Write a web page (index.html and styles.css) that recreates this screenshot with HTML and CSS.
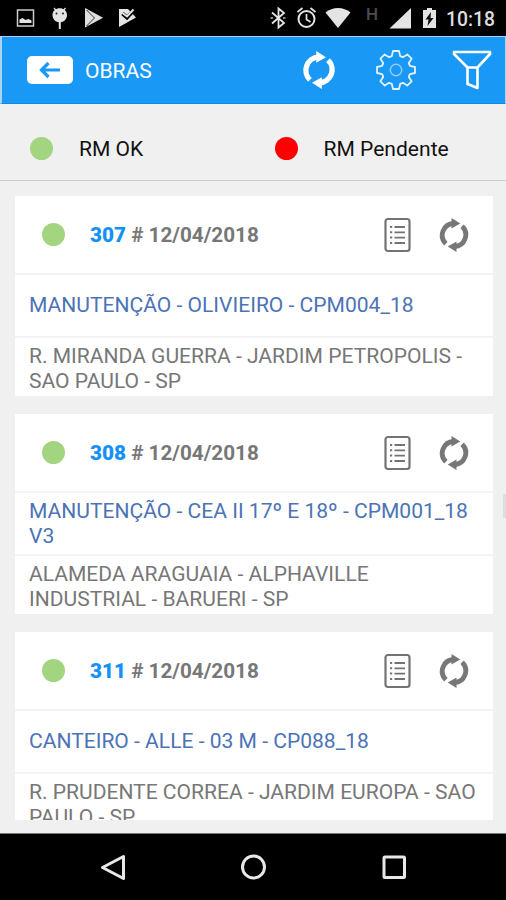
FILE: index.html
```html
<!DOCTYPE html>
<html lang="pt-BR">
<head>
<meta charset="utf-8">
<title>Obras</title>
<link rel="stylesheet" href="styles.css">
</head>
<body>
<svg class="defs" aria-hidden="true">
  <symbol id="sync" viewBox="0 0 30 34">
    <g id="half"><path d="M6.900 25.800A11.800 11.800 0 0 1 14.500 5.500" fill="none" stroke="currentColor" stroke-width="4.800"/><path d="M12.500 0 21.300 5.600 12.500 10.500z" fill="currentColor"/></g>
    <use href="#half" transform="rotate(180 15 17)"/>
  </symbol>
  <symbol id="list" viewBox="0 0 28 36">
    <rect x="2.500" y="2" width="24" height="32" rx="2.500" fill="none" stroke="currentColor" stroke-width="2.200"/>
    <path d="M11.500 10h10.500M11.500 15.300h10.500M11.500 20.600h10.500M11.500 26h10.500" stroke="currentColor" stroke-width="1.800"/>
    <path d="M7 10h2.200M7 15.300h2.200M7 20.600h2.200M7 26h2.200" stroke="currentColor" stroke-width="2"/>
  </symbol>
</svg>
<div class="screen">
  <div class="status">
    <svg width="150" height="36" viewBox="0 0 150 36">
      <rect x="17.500" y="10" width="16" height="16" fill="none" stroke="#ccc" stroke-width="1.500"/>
      <path d="M19.500 23v-3.500l3-1.500 3 2 3-1 3 1.500v2.500z" fill="#e4e4e4"/>
      <path d="M52.500 15c0-9 14.500-9 14.500 0 0 4-3 7-6.200 7.300V29h-2v-6.700c-3.300-.3-6.300-3.300-6.300-7.300z" fill="#e4e4e4"/>
      <path d="m54 8 2.500 3m9-3L63 11" stroke="#e4e4e4" stroke-width="1.200"/>
      <circle cx="56.500" cy="13.500" r="1" fill="#222"/><circle cx="63" cy="13.500" r="1" fill="#222"/>
      <path d="m85 8 18 9.800L85 27.500z" fill="#e0e0e0"/>
      <path d="m86.500 10 8 8-8 8" fill="none" stroke="#333" stroke-width="1"/>
      <path d="M119 9h9l8 8.500-17 9.500z" fill="#e4e4e4"/>
      <path d="m122.500 13.500 4.500 4 7.500-8" fill="none" stroke="#000" stroke-width="3.800"/>
      <path d="m122.500 13 4.500 3.500 6.500-7" fill="none" stroke="#e4e4e4" stroke-width="2"/>
    </svg>
    <div class="status-right">
      <svg width="178" height="36" viewBox="266 0 178 36">
        <path d="m272 12.500 12 10.500-5.500 4.500V8.500L284 13l-12 10.500" fill="none" stroke="#e4e4e4" stroke-width="1.800"/>
        <path d="M270.500 18h2.500m10 0h2.500" stroke="#bbb" stroke-width="1.500"/>
        <circle cx="306.500" cy="19" r="8" fill="none" stroke="#e4e4e4" stroke-width="2"/>
        <path d="M306.500 14v5.500l4 2.500m-13-10 5-4m13 4-5-4" fill="none" stroke="#e4e4e4" stroke-width="1.700"/>
        <path d="M325.500 12.500c7-6 18-6 25 0L338 28z" fill="#e4e4e4"/>
        <text x="366" y="19.500" class="network">H</text>
        <path d="M389.500 28.500 411 8v20.500z" fill="#e4e4e4"/>
        <path d="M423 10h4V8h5v2h4v18h-13z" fill="#e4e4e4"/>
        <path d="m431 12-5.500 7.500h3L427.500 26l6-8h-3z" fill="#111"/>
      </svg>
      <span class="clock">10:18</span>
    </div>
  </div>
  <header class="bar">
    <div class="back"><svg width="22" height="18" viewBox="0 0 22 18"><path d="M21 9H3M9.500 2 2.500 9l7 7" fill="none" stroke="#1998f6" stroke-width="3.200"/></svg></div>
    <h1 class="title">OBRAS</h1>
    <div class="tools">
      <svg class="bar-sync"><use href="#sync"/></svg>
      <svg class="gear" viewBox="-20 -20 40 40"><path d="M-4.200-13.900-3-19H3l1.200 5.100 2.700 1.100 4.400-2.800 4.300 4.300-2.800 4.400 1.100 2.700L19-3V3l-5.100 1.200-1.100 2.700 2.800 4.400-4.300 4.300-4.400-2.800-2.700 1.100L3 19H-3l-1.200-5.100-2.700-1.100-4.400 2.800-4.300-4.300 2.800-4.400-1.100-2.700L-19 3V-3l5.100-1.200 1.100-2.700-2.800-4.400 4.300-4.300 4.400 2.800z" fill="none" stroke="#e2f2ff" stroke-width="1.800" stroke-linejoin="round"/><circle r="5.700" fill="none" stroke="#8fcbfb" stroke-width="1.500"/></svg>
      <svg class="funnel" viewBox="0 0 40 40"><path d="M2 2h36v2L25.500 17.500v20.500l-10-4V17.500L2 4zM15.500 17.500h10" fill="none" stroke="#fff" stroke-width="2.600" stroke-linejoin="round"/></svg>
    </div>
  </header>
  <div class="legend">
    <div class="key"><i class="dot"></i>RM OK</div>
    <div class="key"><i class="dot pending"></i>RM Pendente</div>
  </div>
  <main class="list">
    <div class="scroll">
      <article class="card">
        <div class="head"><i class="dot"></i><div class="id"><b>307</b> # 12/04/2018</div><svg class="doc"><use href="#list"/></svg><svg class="sync"><use href="#sync"/></svg></div>
        <div class="name">MANUTENÇÃO - OLIVIEIRO - CPM004_18</div>
        <div class="address">R. MIRANDA GUERRA - JARDIM PETROPOLIS -<br>SAO PAULO - SP</div>
      </article>
      <article class="card">
        <div class="head"><i class="dot"></i><div class="id"><b>308</b> # 12/04/2018</div><svg class="doc"><use href="#list"/></svg><svg class="sync"><use href="#sync"/></svg></div>
        <div class="name">MANUTENÇÃO - CEA II 17º E 18º - CPM001_18<br>V3</div>
        <div class="address">ALAMEDA ARAGUAIA - ALPHAVILLE<br>INDUSTRIAL - BARUERI - SP</div>
      </article>
      <article class="card">
        <div class="head"><i class="dot"></i><div class="id"><b>311</b> # 12/04/2018</div><svg class="doc"><use href="#list"/></svg><svg class="sync"><use href="#sync"/></svg></div>
        <div class="name">CANTEIRO - ALLE - 03 M - CP088_18</div>
        <div class="address">R. PRUDENTE CORREA - JARDIM EUROPA - SAO<br>PAULO - SP</div>
      </article>
    </div>
    <div class="thumb"></div>
  </main>
  <nav class="nav">
    <svg width="28" height="28" viewBox="0 0 28 28"><path d="M4.500 13.500 25.500 2.500v22z"/></svg>
    <svg width="28" height="28" viewBox="0 0 28 28"><circle cx="14.500" cy="13" r="11"/></svg>
    <svg width="28" height="28" viewBox="0 0 28 28"><rect x="4" y="3" width="20.500" height="20.500" rx="1"/></svg>
  </nav>
</div>
</body>
</html>
```

FILE: styles.css
```css
* { box-sizing: border-box; }
body { margin: 0; font-family: Roboto, "Liberation Sans", sans-serif; }
svg { display: block; flex: none; }
.defs { position: absolute; width: 0; height: 0; }
.screen { width: 506px; height: 900px; background: #f0f0f0; display: flex; flex-direction: column; overflow: hidden; }

.status { height: 36px; background: #000; display: flex; justify-content: space-between; flex: none; }
.status-right { display: flex; align-items: center; }
.clock { width: 62px; padding: 3px 0 0 2px; color: #dedede; font-size: 19.3px; font-weight: 500; line-height: 34px; white-space: nowrap; }
.network { fill: #4c4c4c; font-size: 17px; font-weight: 500; }

.bar { height: 68px; flex: none; display: flex; align-items: center; padding: 0 13px 0 25px; background: #1998f6; border: solid #a9d4f8; border-width: 1px 1px 0 2px; border-bottom: 1px solid #1088ea; }
.back { width: 46px; height: 28px; border-radius: 5px; background: #fff; display: flex; align-items: center; justify-content: center; }
.title { margin: 0 0 0 12px; padding-top: 1px; color: #fff; font-size: 21.05px; font-weight: 400; line-height: 28px; }
.tools { margin-left: auto; display: flex; align-items: center; }
.bar-sync { width: 34px; height: 38px; color: #fff; }
.gear { width: 40px; height: 40px; margin-left: 40px; }
.funnel { width: 40px; height: 40px; margin-left: 36px; }

.legend { height: 77px; flex: none; display: flex; align-items: center; padding: 13px 0 0 30px; border-bottom: 1px solid #ccc; color: #111; font-size: 21.05px; }
.key { flex: none; width: 244.5px; display: flex; align-items: center; }
.dot { width: 23px; height: 23px; border-radius: 50%; background: #a3d580; flex: none; margin-right: 26px; }
.pending { background: #f00; }

.list { height: 652px; flex: none; padding: 15px 13px 0 15px; position: relative; }
.scroll { height: 624px; overflow: hidden; }
.card { height: 200px; margin-bottom: 18px; background: #fff; font-size: 21.05px; line-height: 25px; white-space: nowrap; }
.head { height: 79px; border-bottom: 2px solid #f3f3f3; display: flex; align-items: center; padding: 0 24px 0 27px; }
.head .dot { margin-right: 25px; }
.id { flex: 1; padding-top: 2px; color: #777; font-size: 20.7px; font-weight: 700; }
.id b { color: #1591f5; }
.doc { width: 28px; height: 36px; color: #737373; margin-right: 28px; }
.sync { width: 30px; height: 34px; color: #777; }
.name { height: 63px; border-bottom: 2px solid #f3f3f3; display: flex; align-items: center; padding: 0 0 2px 14px; color: #4b73b6; }
.address { padding: 5px 0 0 14px; color: #777; }
.thumb { position: absolute; right: 0; top: 313px; width: 3px; height: 24px; background: #dedede; }

.nav { flex: 1; background: #000; display: flex; justify-content: center; gap: 113px; padding-top: 20px; border-top: 1px solid #777; }
.nav svg { fill: none; stroke: #e8e8e8; stroke-width: 3; stroke-linejoin: round; }
```
